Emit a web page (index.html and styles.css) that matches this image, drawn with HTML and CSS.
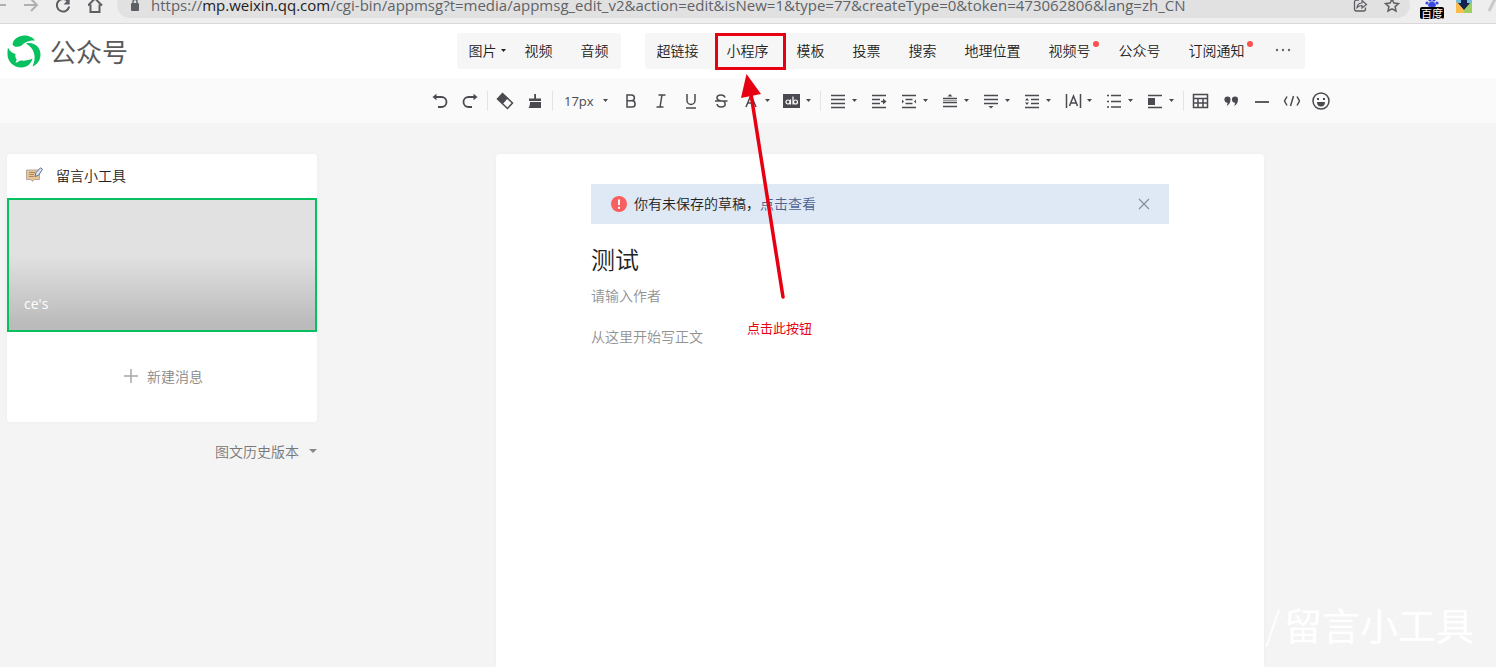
FILE: index.html
```html
<!DOCTYPE html>
<html lang="zh-CN">
<head>
<meta charset="utf-8">
<meta name="viewport" content="width=device-width, initial-scale=1">
<title>公众号</title>
<link rel="stylesheet" href="styles.css">
</head>
<body>
<svg class="defs" aria-hidden="true">
  <symbol id="caret" viewBox="0 0 5 3"><path d="M0 0h5L2.500 3z" fill="currentColor"/></symbol>
</svg>

<div class="browser">
  <button class="browser-btn back" aria-label="后退"><svg width="8" height="16" viewBox="0 0 8 16"><path d="M0 8h6" stroke="#b0b0b2" stroke-width="2"/></svg></button>
  <button class="browser-btn" aria-label="前进"><svg width="16" height="16" viewBox="0 0 16 16"><path d="M0 8h13M7 2l6 6-6 6" fill="none" stroke="#b0b0b2" stroke-width="2"/></svg></button>
  <button class="browser-btn" aria-label="刷新"><svg width="16" height="16" viewBox="0 0 16 16"><path d="M12 4.500A6.200 6.200 0 1 0 13.200 9.500" fill="none" stroke="#5c5f63" stroke-width="2"/><path d="M13.700 1v6.500H7.500z" fill="#5c5f63"/></svg></button>
  <button class="browser-btn" aria-label="主页"><svg width="16" height="16" viewBox="0 0 16 16"><path d="M0 8.500L7 1.500l7 7M2.500 7.500V15h9V7.500" fill="none" stroke="#5c5f63" stroke-width="2"/></svg></button>
  <div class="address">
    <svg width="10" height="14" viewBox="0 0 10 14"><rect x="1" y="5" width="8" height="8" rx="1" fill="#5c5f63"/><path d="M3 6V3.500a2 2 0 0 1 4 0V6" fill="none" stroke="#5c5f63" stroke-width="1.400"/></svg>
    <span class="url">https://<b>mp.weixin.qq.com</b>/cgi-bin/appmsg?t=media/appmsg_edit_v2&amp;action=edit&amp;isNew=1&amp;type=77&amp;createType=0&amp;token=473062806&amp;lang=zh_CN</span>
    <button class="browser-btn" aria-label="分享"><svg width="16" height="16" viewBox="0 0 16 16"><path d="M7 3H4.500a2 2 0 0 0-2 2v7a2 2 0 0 0 2 2h7a2 2 0 0 0 2-2v-1.500" fill="none" stroke="#5c5f63" stroke-width="1.300"/><path d="M5 10.500c.5-3 2-4.500 5-4.500V3.500l4.500 4L10 11V8.500c-2 0-3.500.5-5 2z" fill="none" stroke="#5c5f63" stroke-width="1.200"/></svg></button>
    <button class="browser-btn" aria-label="收藏"><svg width="16" height="16" viewBox="0 0 16 16"><path d="M8 2l1.900 4.100 4.500.5-3.300 3 .9 4.400L8 11.800 4 14l.9-4.400-3.300-3 4.500-.5z" fill="none" stroke="#5c5f63" stroke-width="1.500"/></svg></button>
  </div>
  <button class="extension" aria-label="百度扩展">
    <svg width="14" height="8" viewBox="0 0 14 8"><g fill="#3a4be0"><circle cx="2" cy="4" r="1.600"/><circle cx="5" cy="1" r="1.600"/><circle cx="9" cy="1" r="1.600"/><circle cx="12" cy="4" r="1.600"/><path d="M7 2.500c2 0 4 2.500 4 4S9 8 7 8 3 8 3 6.500s2-4 4-4z"/></g></svg>
    <span class="extension-badge">百度</span>
  </button>
  <button class="browser-btn download" aria-label="下载扩展"><svg width="16" height="16" viewBox="0 0 16 16"><path d="M0 0h16v8H0z" fill="#74bde0"/><path d="M0 5l8 5v6H0z" fill="#fdbb4b"/><path d="M16 5l-8 5v6h8z" fill="#9dd060"/><path d="M5 0h6v6h3l-6 7-6-7h3z" fill="#10224f"/></svg></button>
  <svg class="edge" width="8" height="16" viewBox="0 0 8 16"><path d="M1 14L8 0" stroke="#c9c9c9" stroke-width="3"/></svg>
</div>

<header class="header">
  <a class="logo" href="#">
    <svg width="34" height="34" viewBox="0 0 34 34" fill="#07c160">
      <path d="M5.500 10.500C6 5 12 1.500 17 1.500c5 0 9 2 11 5C22 6 17 8.500 14 12 11 13 7 13.500 5.500 10.500z"/>
      <path d="M19 9.500C27 7.500 33.500 13 33.500 20.500 33.500 26.500 30 30.500 25.500 32.500c1.500-4 2.500-6.500 2-11C27 16.500 24 12.500 19 9.500z"/>
      <path d="M1 13.500C2.500 16.500 4.500 19 8.500 20c-.5 2 0 4 1.200 5.500L8.500 29l5-2.500c4.500.5 8.500-.3 12-2-1 5-5.500 9-11 9C6 33.500.5 27 .5 20.500c0-2.500 0-4.500.5-7z"/>
    </svg>
    <span>公众号</span>
  </a>
  <nav class="menus">
    <div class="menu">
      <button>图片<svg class="caret"><use href="#caret"/></svg></button>
      <button>视频</button>
      <button>音频</button>
    </div>
    <div class="menu">
      <button>超链接</button>
      <button class="marked">小程序</button>
      <button>模板</button>
      <button>投票</button>
      <button>搜索</button>
      <button>地理位置</button>
      <button class="dot">视频号</button>
      <button>公众号</button>
      <button class="dot">订阅通知</button>
      <button aria-label="更多"><svg width="20" height="4" viewBox="0 0 20 4" fill="#666"><circle cx="4" cy="2" r="1.200"/><circle cx="10" cy="2" r="1.200"/><circle cx="16" cy="2" r="1.200"/></svg></button>
    </div>
  </nav>
</header>

<div class="toolbar" role="toolbar">
  <button aria-label="撤销"><svg class="icon" viewBox="0 0 18 18"><path d="M4 5h6.500a4.800 4.800 0 0 1 0 10H7" class="bold"/><path d="M1.500 5l4-3.200v6.400z" class="fill"/></svg></button>
  <button aria-label="重做"><svg class="icon" viewBox="0 0 18 18"><path d="M14 5H7.500a4.800 4.800 0 0 0 0 10H11" class="bold"/><path d="M16.500 5l-4-3.200v6.400z" class="fill"/></svg></button>
  <i class="sep"></i>
  <button aria-label="清除格式"><svg class="icon" viewBox="0 0 18 18"><path d="M6.500 1.500l10 9.500-5 5.500L1.500 7z"/><path d="M6.500 1.500l5.200 4.900-5 5.500L1.500 7z" class="fill"/></svg></button>
  <button aria-label="格式刷"><svg class="icon" viewBox="0 0 18 18"><path d="M8.200 2h1.800v4.500h5V9H3V6.500h5.200zM4 10h11v6H2.500C3.500 14.500 4 12.500 4 10z" class="fill"/></svg></button>
  <i class="sep"></i>
  <label class="size"><select aria-label="字号"><option>17px</option></select><svg class="caret"><use href="#caret"/></svg></label>
  <button aria-label="加粗"><svg class="icon" viewBox="0 0 18 18"><path d="M5 3h4.500a2.800 2.800 0 0 1 0 5.800H5zM5 8.800h5a3.100 3.100 0 0 1 0 6.200H5z"/></svg></button>
  <button aria-label="斜体"><svg class="icon" viewBox="0 0 18 18"><path d="M6.500 3h7M4.500 15h7M10 3L8 15"/></svg></button>
  <button aria-label="下划线"><svg class="icon" viewBox="0 0 18 18"><path d="M5 2v6.500a4 4 0 0 0 8 0V2M4 16h10"/></svg></button>
  <button aria-label="删除线"><svg class="icon" viewBox="0 0 18 18"><path d="M13 5.500C12.500 3.500 11 3 9 3 6.500 3 5 4 5 5.800 5 7.500 6.500 8.500 9 8.800M5 12c.3 2 1.700 3 4 3 2.600 0 4.200-1 4.200-3 0-1-.5-2-1.500-2.700M3 9h12.500"/></svg></button>
  <button class="drop" aria-label="字体颜色"><svg class="icon" viewBox="0 0 18 18"><path d="M4 15L9 3l5 12M6 11h6"/></svg><svg class="caret"><use href="#caret"/></svg></button>
  <button class="drop" aria-label="背景色"><svg class="icon" viewBox="0 0 18 18"><path d="M0 2h17v14H0z" class="fill"/><g class="light"><circle cx="5" cy="10" r="2"/><path d="M7.500 7.500v5M10 4.500v8"/><circle cx="12.500" cy="10" r="2"/></g></svg><svg class="caret"><use href="#caret"/></svg></button>
  <i class="sep"></i>
  <button class="drop" aria-label="对齐"><svg class="icon" viewBox="0 0 18 18"><path d="M2 3.500h14M2 7.500h14M2 11.500h14M2 15.500h14"/></svg><svg class="caret"><use href="#caret"/></svg></button>
  <button aria-label="首行缩进"><svg class="icon" viewBox="0 0 18 18"><path d="M2 3.500h14M2 7.500h8M2 11.500h8M2 15.500h14M11 9.500h4"/><path d="M13 6.500l3.500 3-3.500 3z" class="fill"/></svg></button>
  <button class="drop" aria-label="两端缩进"><svg class="icon" viewBox="0 0 18 18"><path d="M2 3.500h14M5.500 7.500h7M5.500 11.500h7M2 15.500h14"/><path d="M2 7.500l2 2-2 2zM16 7.500l-2 2 2 2z" class="fill"/></svg><svg class="caret"><use href="#caret"/></svg></button>
  <button class="drop" aria-label="段前距"><svg class="icon" viewBox="0 0 18 18"><path d="M2 6.500h14M2 10.500h14M2 14.500h14"/><path d="M2 8.500h14" class="thin"/><path d="M6.500 4.500h5L9 2z" class="fill"/></svg><svg class="caret"><use href="#caret"/></svg></button>
  <button class="drop" aria-label="段后距"><svg class="icon" viewBox="0 0 18 18"><path d="M2 3.500h14M2 7.500h14M2 11.500h14"/><path d="M6.500 14h5L9 16.500z" class="fill"/></svg><svg class="caret"><use href="#caret"/></svg></button>
  <button class="drop" aria-label="行间距"><svg class="icon" viewBox="0 0 18 18"><path d="M2 3.500h14M8 7.500h8M8 11.500h8M2 15.500h14"/><path d="M2 8.500L4 6l2 2.500zM2 10.500L4 13l2-2.500z" class="fill"/></svg><svg class="caret"><use href="#caret"/></svg></button>
  <button class="drop" aria-label="字间距"><svg class="icon" viewBox="0 0 18 18"><path d="M2.500 2v14M16.500 2v14M5.500 14l4-10 4 10M7 11h5"/></svg><svg class="caret"><use href="#caret"/></svg></button>
  <button class="drop" aria-label="列表"><svg class="icon" viewBox="0 0 18 18"><path d="M6 3.500h10M6 9.500h10M6 15h10M2 3.500h2M2 9.500h2M2 15h2"/></svg><svg class="caret"><use href="#caret"/></svg></button>
  <button class="drop" aria-label="浮动"><svg class="icon" viewBox="0 0 18 18"><path d="M2 3.500h14M2 15.500h14"/><path d="M2 6h7v7H2z" class="fill"/></svg><svg class="caret"><use href="#caret"/></svg></button>
  <i class="sep"></i>
  <button aria-label="表格"><svg class="icon" viewBox="0 0 18 18"><path d="M1.500 2.500h14v13h-14zM1.500 6.500h14M1.500 11h14M6 6.500v9M11 6.500v9"/></svg></button>
  <button aria-label="引用"><svg class="icon" viewBox="0 0 18 18"><path d="M5.500 4.500a3 3 0 0 1 3 3.200c0 3-1.500 5-4 6.300.8-1.200 1-2.200 1-3.300a3 3 0 1 1 0-6.200zM13 4.500a3 3 0 0 1 3 3.200c0 3-1.500 5-4 6.300.8-1.200 1-2.200 1-3.300a3 3 0 1 1 0-6.200z" class="fill"/></svg></button>
  <button aria-label="分割线"><svg class="icon" viewBox="0 0 18 18"><path d="M3 10h14" class="bold"/></svg></button>
  <button aria-label="代码"><svg class="icon" viewBox="0 0 18 18"><path d="M5 4.500L2.500 9 5 13.500M15 4.500L17.500 9 15 13.500M11.500 4l-3 10"/></svg></button>
  <button aria-label="表情"><svg class="icon" viewBox="0 0 18 18"><circle cx="9" cy="9" r="8"/><path d="M5 10h8c0 3-1.500 4.500-4 4.500S5 13 5 10zM5 6h2v2H5zM11 6h2v2h-2z" class="fill"/></svg></button>
</div>

<main class="layout">
  <aside class="sidebar">
    <section class="card">
      <h2 class="account">
        <svg width="18" height="16" viewBox="0 0 18 16"><path d="M1.500 3h13v9.500H9L7.500 14.500 6 12.500H1.500z" fill="#ebc48f" stroke="#b5a9a6"/><path d="M4 5.500h6M4 7.500h5M4 9.500h5" stroke="#9c8a78"/><path d="M10 9.500l1-4L15.500.8l2 1.500-4 6z" fill="#dbe6f5" stroke="#5d7399"/></svg>
        <span>留言小工具</span>
      </h2>
      <div class="cover"><span>ce's</span></div>
      <button class="add"><svg width="14" height="14" viewBox="0 0 14 14"><path d="M0 7h14M7 0v14" stroke="#a6a6a6" stroke-width="1.500"/></svg>新建消息</button>
    </section>
    <button class="history">图文历史版本<svg width="8" height="4" viewBox="0 0 8 4"><path d="M0 0h8L4 4z" fill="#888"/></svg></button>
  </aside>
  <section class="paper">
    <div class="notice">
      <svg width="16" height="16" viewBox="0 0 16 16"><circle cx="8" cy="8" r="8" fill="#fa5f5f"/><path d="M8 3.500v5.500M8 10.800v1.900" stroke="#fff" stroke-width="2"/></svg>
      <p>你有未保存的草稿，<a href="#">点击查看</a></p>
      <button aria-label="关闭"><svg width="12" height="12" viewBox="0 0 12 12"><path d="M1 1l10 10M11 1L1 11" stroke="#888e98" stroke-width="1.200"/></svg></button>
    </div>
    <input class="title" type="text" value="测试" aria-label="标题">
    <input class="author" type="text" placeholder="请输入作者" aria-label="作者">
    <textarea class="content" placeholder="从这里开始写正文" aria-label="正文"></textarea>
  </section>
</main>

<svg class="arrow" width="50" height="230" viewBox="0 0 50 230"><path d="M11 20L43 223" stroke="#e60012" stroke-width="3.500" stroke-linecap="round"/><path d="M6.500 0L21 20 1 24z" fill="#e60012"/></svg>
<p class="hint">点击此按钮</p>
<p class="watermark"><span>/</span>留言小工具</p>
</body>
</html>
```

FILE: styles.css
```css
* { box-sizing: border-box; }

html, body { height: 100%; }

body {
  position: relative;
  display: flex;
  flex-direction: column;
  margin: 0;
  overflow: hidden;
  background: #f4f4f4;
  color: #222;
  font: 350 14px/20px "Noto Sans CJK SC", sans-serif;
}

h2, p { margin: 0; font-size: 14px; font-weight: inherit; }

button, input, select, textarea {
  margin: 0;
  padding: 0;
  border: 0;
  outline: 0;
  background: none;
  color: inherit;
  font: inherit;
}

svg { display: block; flex: none; }
a { text-decoration: none; }

.defs { position: absolute; width: 0; height: 0; }
.caret { width: 5px; height: 3px; }

/* Browser chrome */
.browser {
  display: flex;
  flex: none;
  align-items: flex-end;
  height: 24px;
  border-bottom: 1px solid #d9d9d9;
  background: #eee;
}
.browser-btn { flex: none; margin: 0 8px 10px; }
.browser-btn.back { margin-left: 0; }
.address {
  display: flex;
  flex: 1;
  align-items: center;
  height: 26px;
  margin: 0 8px 5px 5px;
  padding: 0 3px 0 13px;
  border-radius: 13px;
  background: #e1e1e1;
}
.address .browser-btn { margin: 0 7px 0 9px; }
.url {
  flex: 1;
  margin-left: 11px;
  color: #5f6368;
  font: 400 15px/10px "Open Sans", sans-serif;
  white-space: nowrap;
}
.url b { color: #202124; font-weight: 400; }
.extension {
  display: flex;
  flex: none;
  flex-direction: column;
  align-items: center;
  width: 28px;
  margin-bottom: 4px;
}
.extension-badge {
  padding: 0 1px;
  border-radius: 2px;
  background: #000;
  color: #fff;
  font-size: 11px;
  font-weight: 400;
  line-height: 12px;
}
.browser-btn.download { margin: 0 0 10px 10px; }
.edge { margin: 0 0 10px 16px; }

/* Header */
.header {
  display: flex;
  flex: none;
  align-items: center;
  height: 54px;
  padding: 0 52px 0 7px;
  background: #fff;
}
.logo {
  display: flex;
  align-items: center;
  gap: 9px;
  width: 310px;
  color: #5a5a5a;
  font-size: 26px;
  font-weight: 400;
  line-height: 36px;
}
.menus { display: flex; flex: 1; justify-content: center; gap: 24px; }
.menu {
  display: flex;
  gap: 28px;
  height: 36px;
  padding: 0 12px;
  border-radius: 3px;
  background: #f6f6f6;
}
.menu button { position: relative; display: flex; align-items: center; padding-bottom: 2px; white-space: nowrap; }
.menu .caret { margin: 0 -9px 0 4px; }
.dot::after {
  position: absolute;
  top: 8px;
  right: -8px;
  width: 6px;
  height: 6px;
  border-radius: 50%;
  background: #fa5151;
  content: "";
}
.marked::before {
  position: absolute;
  inset: 0 -17px -1px -12px;
  border: 3px solid #e60012;
  content: "";
}

/* Formatting toolbar */
.toolbar {
  display: flex;
  flex: none;
  align-items: center;
  justify-content: center;
  height: 45px;
  padding: 0 52px 0 317px;
  background: #fafafa;
  color: #4a4a50;
}
.toolbar button {
  display: flex;
  flex: none;
  align-items: center;
  width: 30px;
  height: 30px;
  padding-left: 6px;
}
.toolbar .drop { gap: 5px; width: 41px; }
.icon { width: 18px; height: 18px; fill: none; stroke: currentColor; stroke-width: 1.500; }
.icon .fill { fill: currentColor; stroke: none; }
.icon .bold { stroke-width: 1.800; }
.icon .thin { stroke-width: 1; opacity: 0.500; }
.icon .light { stroke: #fff; stroke-width: 1.200; }
.sep { flex: none; width: 1px; height: 20px; margin: 0 2px; background: #e4e4e8; }
.size { display: flex; align-items: center; gap: 8px; width: 61px; padding-left: 9px; }
.size select { width: 31px; appearance: none; font: 400 13px/20px "Open Sans", sans-serif; }

/* Workspace */
.layout { display: flex; flex: 1; align-items: stretch; padding: 31px 53px 0 7px; }
.sidebar { flex: none; width: 310px; }
.card { border-radius: 4px; background: #fff; box-shadow: 0 0 6px rgba(0, 0, 0, 0.030); }
.account { display: flex; align-items: center; gap: 13px; height: 44px; padding: 0 18px 2px; }
.cover {
  display: flex;
  align-items: flex-end;
  height: 134px;
  padding: 0 15px 16px;
  border: 2px solid #07c160;
  background: linear-gradient(#e1e1e1 43%, #bbb 95%);
  color: #fff;
  font-family: "Open Sans", sans-serif;
  font-weight: 400;
}
.add {
  display: flex;
  align-items: center;
  justify-content: center;
  gap: 9px;
  width: 100%;
  height: 90px;
  padding: 0 0 3px 3px;
  color: #888;
}
.history {
  display: flex;
  align-items: center;
  gap: 10px;
  margin: 19px 0 0 auto;
  color: #777;
}
.paper {
  display: flex;
  flex: 0 1 768px;
  flex-direction: column;
  margin: 0 auto;
  padding: 30px 95px 0;
  border-radius: 4px 4px 0 0;
  background: #fff;
  box-shadow: 0 0 6px rgba(0, 0, 0, 0.030);
}
.notice {
  display: flex;
  align-items: center;
  gap: 7px;
  height: 40px;
  padding: 0 19px 0 20px;
  background: #dfe9f6;
}
.notice p { padding-bottom: 2px; }
.notice a { color: #4d628f; }
.notice button { margin-left: auto; }
.title { height: 36px; margin-top: 16px; font-size: 24px; }
.author { height: 20px; margin-top: 9px; }
.content { flex: 1; margin-top: 21px; resize: none; }
.paper ::placeholder { color: #929292; opacity: 1; }

/* Annotations drawn over the page */
.arrow { position: absolute; top: 74px; left: 740px; pointer-events: none; }
.hint { position: absolute; top: 318px; left: 747px; color: #e60012; font-size: 13px; font-weight: 400; }
.watermark {
  position: absolute;
  right: 22px;
  bottom: 18px;
  color: #fff;
  font-size: 38px;
  font-weight: 400;
  line-height: 50px;
  pointer-events: none;
}
.watermark span { padding-right: 4px; font-weight: 300; }
```
